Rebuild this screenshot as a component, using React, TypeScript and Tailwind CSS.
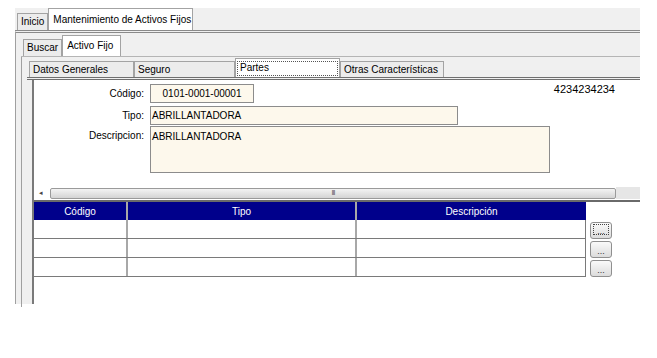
const font = "font-['Liberation_Sans',Arial,sans-serif]";

function Tab({ label, active, focus, className }: { label: string; active?: boolean; focus?: boolean; className: string }) {
  return (
    <div
      className={`${className} flex items-center whitespace-nowrap border border-b-0 border-[#a3a3a3] text-[10px] leading-none text-black ${
        active ? "bg-white" : "bg-[#ececec]"
      }`}
    >
      {focus ? (
        <span className="flex h-[15px] w-full items-center border border-dotted border-[#555] px-[2px]">{label}</span>
      ) : (
        label
      )}
    </div>
  );
}

function DotsButton({ focus }: { focus?: boolean }) {
  return (
    <div className="flex h-[17px] w-[22px] items-end justify-center rounded-[3px] border border-[#8f8f8f] bg-gradient-to-b from-[#fafafa] to-[#dcdcdc] pb-[3px]">
      <span
        className={`flex h-[11px] w-[16px] items-end justify-center text-[9px] leading-[6px] text-[#333] ${
          focus ? "border border-dotted border-[#444]" : ""
        }`}
      >
        ...
      </span>
    </div>
  );
}

export default function App() {
  const rows = [0, 1, 2];
  return (
    <div className={`${font} h-[358px] w-[657px] overflow-hidden bg-white text-[10px] text-black`}>
      <div className="ml-[15px] mt-[8px] w-[625px]">
        {/* nivel 1: pestañas principales */}
        <div className="flex h-[22px] items-end bg-[#f0f0f0] pl-[2px]">
          <Tab label="Inicio" className="h-[17px] px-[3px]" />
          <Tab label="Mantenimiento de Activos Fijos" active className="h-[22px] w-[145px] px-[4px]" />
        </div>
        <div className="h-[274px] border-l border-t-[3px] border-double border-l-[#a0a0a0] border-t-[#8a8a8a] bg-[#f0f0f0] pl-[5px] pt-[4px]">
          {/* nivel 2 */}
          <div className="flex h-[20px] items-end border-b border-[#b5b5b5] pl-[2px]">
            <Tab label="Buscar" className="h-[17px] px-[3px]" />
            <Tab label="Activo Fijo" active className="h-[21px] w-[59px] px-[4px]" />
          </div>
          <div className="h-[250px] border-l border-[#a0a0a0] pl-[5px] pt-[3px]">
            {/* nivel 3 */}
            <div className="flex h-[20px] items-end border-b-[3px] border-double border-[#6f6f6f] pl-[2px]">
              <Tab label="Datos Generales" className="h-[16px] w-[105px] px-[3px]" />
              <Tab label="Seguro" className="h-[16px] w-[101px] px-[3px]" />
              <Tab label="Partes" active focus className="h-[19px] w-[105px] p-[1px]" />
              <Tab label="Otras Características" className="h-[16px] w-[104px] px-[3px]" />
            </div>
            <div className="ml-[5px] h-[224px] border-l-2 border-[#7a7a7a] bg-white">
              {/* formulario */}
              <div className="relative h-[107px] pt-[3px]">
                <span className="absolute right-[25px] top-[1px] text-[11px]">4234234234</span>
                <div className="flex h-[20px] items-center">
                  <span className="w-[116px] pr-[6px] text-right">Código:</span>
                  <div className="flex h-[19px] w-[104px] items-center justify-center border border-[#8c8c8c] bg-[#fdf8ec]">
                    0101-0001-00001
                  </div>
                </div>
                <div className="mt-[2px] flex h-[20px] items-center">
                  <span className="w-[116px] pr-[6px] text-right">Tipo:</span>
                  <div className="flex h-[19px] w-[308px] items-center border border-[#8c8c8c] bg-[#fdf8ec] px-[1px]">
                    ABRILLANTADORA
                  </div>
                </div>
                <div className="mt-[1px] flex items-start">
                  <span className="w-[116px] pr-[6px] pt-[2px] text-right">Descripcion:</span>
                  <div className="h-[47px] w-[400px] border border-[#8c8c8c] bg-[#fdf8ec] px-[1px] pt-[2px]">
                    ABRILLANTADORA
                  </div>
                </div>
              </div>
              {/* barra de desplazamiento */}
              <div className="flex h-[12px] items-center">
                <div className="flex h-[11px] w-[14px] items-center justify-center text-[7px] text-[#444]">◂</div>
                <div className="ml-[2px] flex h-[11px] w-[566px] items-center justify-center rounded-[2px] border border-[#9a9a9a] bg-gradient-to-b from-[#f4f4f4] to-[#d4d4d4] text-[7px] tracking-[-1px] text-[#555]">
                  III
                </div>
                <div className="h-[12px] flex-1 bg-[#e6e6e6]" />
              </div>
              <div className="mt-[1px] h-[2px] bg-[#6a6a6a]" />
              {/* grilla */}
              <div className="flex">
                <div className="w-[552px]">
                  <div className="flex h-[18px] bg-[#00008b] text-white">
                    <div className="flex w-[94px] items-center justify-center border-r-2 border-[#a8a8a8]">Código</div>
                    <div className="flex w-[229px] items-center justify-center border-r-2 border-[#a8a8a8]">Tipo</div>
                    <div className="flex flex-1 items-center justify-center">Descripción</div>
                  </div>
                  {rows.map((r) => (
                    <div key={r} className="flex h-[19px] border-b border-r border-[#7a7a7a]">
                      <div className="w-[94px] border-r-2 border-[#a8a8a8]" />
                      <div className="w-[229px] border-r-2 border-[#a8a8a8]" />
                      <div className="flex-1" />
                    </div>
                  ))}
                </div>
                <div className="ml-[4px] flex flex-col gap-[2px] pt-[20px]">
                  {rows.map((r) => (
                    <DotsButton key={r} focus={r === 0} />
                  ))}
                </div>
              </div>
            </div>
          </div>
        </div>
      </div>
    </div>
  );
}
